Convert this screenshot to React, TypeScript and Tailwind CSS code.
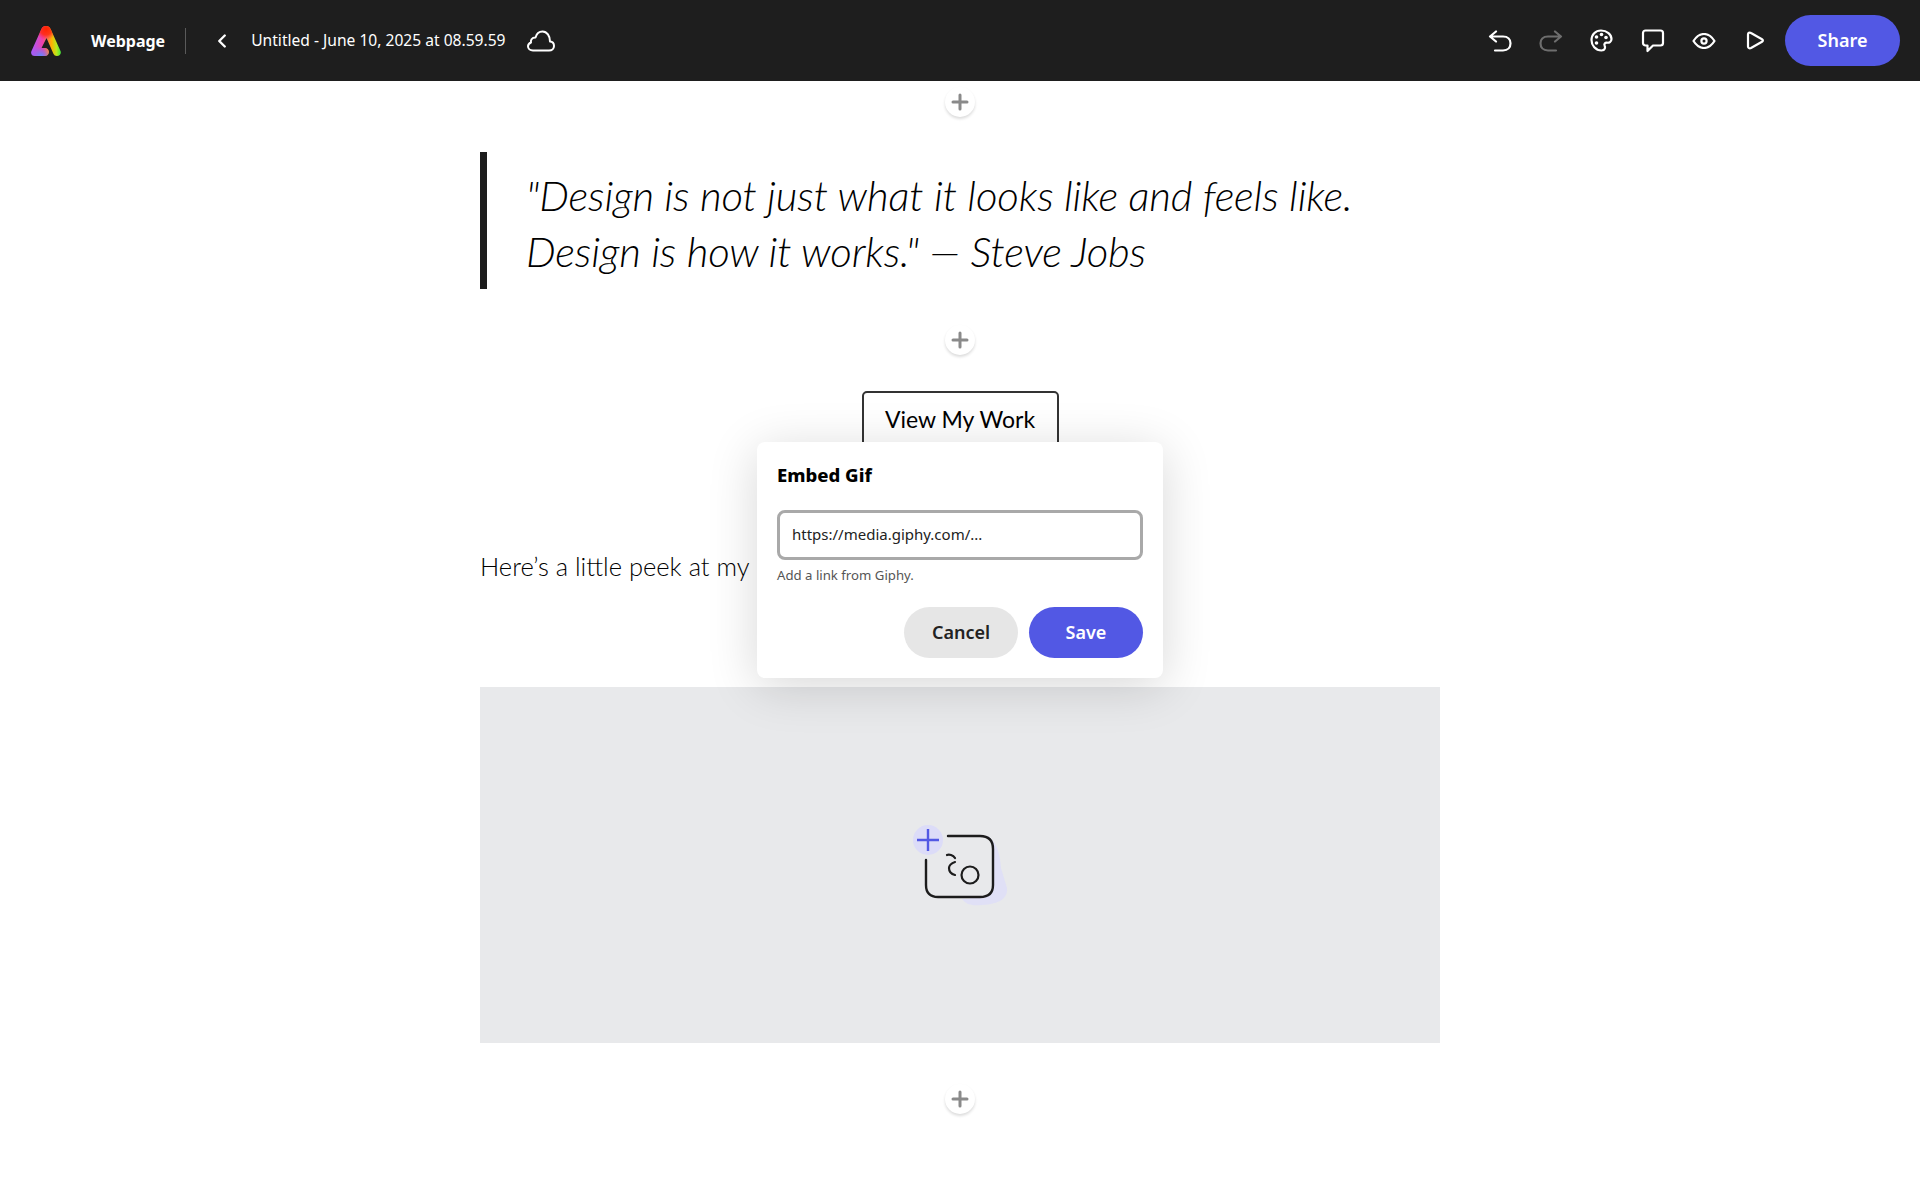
import { ChevronLeft, Plus } from 'lucide-react';
import type { ReactNode } from 'react';

const uiFont = "font-['Noto_Sans',sans-serif]";
const docFont = "font-['Lato',sans-serif]";

function AppLogo() {
  return (
    <svg width="30" height="30" viewBox="0 0 30 30">
      <defs>
        <clipPath id="logoShape">
          <path d="M15 0C17.5 0 18.7 1 19.6 3L29.5 25C30.6 27.5 29 30 26 30C24.3 30 23 29.2 22.3 27.5L15.5 12L10.5 22L14 22C16.500 22 18 23.7 18 26C18 28.3 16.5 30 14 30L4 30C1 30 -.7 27.5 .5 25L10.4 3C11.3 1 12.5 0 15 0Z" />
        </clipPath>
        <linearGradient id="logoBase" x1="0" y1="0" x2="1" y2="0">
          <stop offset="0" stopColor="#a35cff" />
          <stop offset="0.4" stopColor="#f23fa8" />
          <stop offset="0.68" stopColor="#ffb000" />
          <stop offset="0.85" stopColor="#b8e81c" />
          <stop offset="1" stopColor="#3fe83a" />
        </linearGradient>
        <radialGradient id="logoTop" cx="0.5" cy="0.5" r="0.5">
          <stop offset="0" stopColor="#ff2200" />
          <stop offset="0.55" stopColor="#ff2a10" stopOpacity="0.85" />
          <stop offset="1" stopColor="#ff2a60" stopOpacity="0" />
        </radialGradient>
        <radialGradient id="logoLow" cx="0.5" cy="0.5" r="0.5">
          <stop offset="0" stopColor="#5f8bff" />
          <stop offset="1" stopColor="#7b6cff" stopOpacity="0" />
        </radialGradient>
      </defs>
      <g clipPath="url(#logoShape)">
        <rect width="30" height="30" fill="url(#logoBase)" />
        <circle cx="15" cy="3" r="11" fill="url(#logoTop)" />
        <circle cx="10" cy="30" r="10" fill="url(#logoLow)" />
      </g>
    </svg>
  );
}

function CloudIcon() {
  return (
    <svg width="28" height="22" viewBox="0 0 28 22" fill="none" stroke="currentColor" strokeWidth="2" strokeLinejoin="round">
      <path d="M6 20.500H22C25 20.500 27 18.500 27 16C27 13.500 25.200 11.700 23 11.500C23 6 20 1.500 15.500 1.500C12 1.500 9.500 3.800 8.500 7.500C4.500 7.500 3.500 10.500 4 12.500C2.200 13.200 1 14.800 1 16.300C1 18.700 3 20.500 6 20.500Z" />
    </svg>
  );
}

function UndoIcon({ flip }: { flip?: boolean }) {
  return (
    <svg width="24" height="22" viewBox="0 0 24 22" fill="none" stroke="currentColor" strokeWidth="2.2" strokeLinecap="round" strokeLinejoin="round" className={flip ? '-scale-x-100' : ''}>
      <path d="M8 1.500L2 6.500L8 11.500M2 6.500H15C20 6.500 22.500 9.500 22.500 13.200C22.500 17.200 20 20.500 15 20.500H7" />
    </svg>
  );
}

function PaletteIcon() {
  return (
    <svg width="23" height="23" viewBox="0 0 23 23" fill="none" stroke="currentColor" strokeWidth="2.2">
      <path d="M11 1.500C17 1.500 21.500 5.500 21.500 10C21.500 13 19 14 17 13.700C15 13.500 13.800 15 14.600 16.600C15.500 18.200 15.300 21.500 11.500 21.500C5.500 21.500 1.500 16.500 1.500 11C1.500 5.500 5.500 1.500 11 1.500Z" />
      <g fill="currentColor" stroke="none">
        <circle cx="6.500" cy="8" r="1.800" />
        <circle cx="11.500" cy="5.500" r="1.800" />
        <circle cx="16" cy="8.500" r="1.800" />
        <circle cx="6.500" cy="14" r="1.800" />
      </g>
    </svg>
  );
}

function CommentIcon() {
  return (
    <svg width="24" height="24" viewBox="0 0 24 24" fill="none" stroke="currentColor" strokeWidth="2.2" strokeLinejoin="round">
      <path d="M4.500 1.500H19.500C21 1.500 22 2.500 22 4V14C22 15.500 21 16.500 19.500 16.500H12L6.500 22V16.500H4.500C3 16.500 2 15.500 2 14V4C2 2.500 3 1.500 4.500 1.500Z" />
    </svg>
  );
}

function EyeIcon() {
  return (
    <svg width="24" height="16" viewBox="0 0 24 16" fill="none" stroke="currentColor" strokeWidth="2.2" strokeLinejoin="round">
      <path d="M1.500 8C5 2.500 8.500 1 12 1C15.500 1 19 2.500 22.500 8C19 13.500 15.500 15 12 15C8.500 15 5 13.500 1.500 8Z" />
      <circle cx="12" cy="8" r="2.600" />
    </svg>
  );
}

function PlayIcon() {
  return (
    <svg width="18" height="19" viewBox="0 0 18 19" fill="none" stroke="currentColor" strokeWidth="2.2" strokeLinejoin="round">
      <path d="M2 3.500C2 2 3.500 1 5 2L16 8.200C17.200 8.900 17.200 10 16 10.700L5 17C3.500 17.800 2 17 2 15.500Z" />
    </svg>
  );
}

function ToolSlot({ children, muted }: { children: ReactNode; muted?: boolean }) {
  return <div className={`flex h-8 w-[51px] items-center justify-center ${muted ? 'text-[#6e6e6e]' : ''}`}>{children}</div>;
}

function AddBlock() {
  return (
    <div className="flex justify-center">
      <button className="flex h-[30px] w-[30px] items-center justify-center rounded-full bg-white text-[#8a8a8a] shadow-[0_2px_3px_rgba(0,0,0,0.14)]">
        <Plus size={24} strokeWidth={3} />
      </button>
    </div>
  );
}

function MediaPlaceholder() {
  return (
    <svg width="100" height="90" viewBox="0 0 100 90" fill="none">
      <path d="M60 16H78C86 22 90 32 91 48L97 68C98 78 90 84 72 85C60 86 56 84 52 79H60Z" fill="#e0e0f6" />
      <path d="M38 16H70C79 16 83 20 83 29V65C83 73 79 77 70 77H28C20 77 16 73 16 65V40Z" fill="#e8e9eb" />
      <circle cx="18" cy="20" r="15" fill="#dcdcf8" />
      <path d="M18 9V31M7 20H29" stroke="#5258e4" strokeWidth="2.400" />
      <path d="M38 16H70C79 16 83 20 83 29V65C83 73 79 77 70 77H28C20 77 16 73 16 65V40" stroke="#1c1c1c" strokeWidth="2.400" strokeLinecap="round" />
      <circle cx="60" cy="55" r="8.500" stroke="#1c1c1c" strokeWidth="2.200" />
      <path d="M45 42C41 43 39 46 39 48C39 51 41 54 45 55" stroke="#1c1c1c" strokeWidth="2.200" strokeLinecap="round" />
      <path d="M37 35C39 34 43 35 45 38" stroke="#1c1c1c" strokeWidth="2.200" strokeLinecap="round" />
    </svg>
  );
}

export default function App() {
  return (
    <div className="relative min-h-[1200px] bg-white">
      <header className={`flex h-[81px] items-center justify-between bg-[#1e1e1e] pl-[31px] pr-5 text-white ${uiFont}`}>
        <div className="flex items-center">
          <AppLogo />
          <span className="ml-[30px] text-[16px] font-bold">Webpage</span>
          <div className="ml-5 h-[26px] w-px bg-[#5a5a5a]" />
          <ChevronLeft className="ml-[25px]" size={22} strokeWidth={2.6} />
          <span className="ml-[18px] text-[15.6px]">Untitled - June 10, 2025 at 08.59.59</span>
          <div className="ml-[21px]">
            <CloudIcon />
          </div>
        </div>
        <div className="flex items-center">
          <ToolSlot><UndoIcon /></ToolSlot>
          <ToolSlot muted><UndoIcon flip /></ToolSlot>
          <ToolSlot><PaletteIcon /></ToolSlot>
          <ToolSlot><CommentIcon /></ToolSlot>
          <ToolSlot><EyeIcon /></ToolSlot>
          <ToolSlot><PlayIcon /></ToolSlot>
          <button className="ml-[5px] h-[51px] w-[115px] rounded-full bg-[#5258e4] text-[18px] font-semibold text-white">Share</button>
        </div>
      </header>

      <main className={`mx-auto w-[960px] text-black ${docFont}`}>
        <div className="pt-[6px]">
          <AddBlock />
        </div>
        <blockquote className="mt-[35px] border-l-[7px] border-[#1c1c1c] pb-[10px] pl-[39px] pt-[15px] text-[42px] font-light italic leading-[56px] tracking-[-0.15px]">
          "Design is not just what it looks like and feels like.
          <br />
          Design is how it works." — Steve Jobs
        </blockquote>
        <div className="mt-[36px]">
          <AddBlock />
        </div>
        <div className="mt-[36px] flex justify-center">
          <button className="h-[56px] w-[197px] rounded-[5px] border-2 border-[#333] text-[23px]">View My Work</button>
        </div>
        <p className="mt-[101px] text-[25.500px] font-light leading-[36px]">Here’s a little peek at my</p>
        <div className="mt-[103px] flex h-[356px] items-center justify-center bg-[#e8e9eb]">
          <MediaPlaceholder />
        </div>
        <div className="mt-[41px]">
          <AddBlock />
        </div>
      </main>

      <div className={`absolute left-[757px] top-[442px] w-[406px] rounded-lg bg-white px-5 pb-5 pt-[21px] shadow-[0_8px_50px_rgba(0,0,0,0.16)] ${uiFont}`}>
        <h2 className="text-[18.500px] font-extrabold leading-6 text-black">Embed Gif</h2>
        <div className="mt-[23px] flex h-[50px] items-center rounded-lg border-[3px] border-[#a9a9a9] pb-px pl-[12px] text-[15px] text-[#222]">
          https://media.giphy.com/...
        </div>
        <p className="mt-[5px] text-[13.200px] leading-5 text-[#555]">Add a link from Giphy.</p>
        <div className="mt-[22px] flex justify-end gap-[11px]">
          <button className="h-[51px] w-[114px] rounded-full bg-[#e6e6e6] text-[18px] font-semibold text-[#222]">Cancel</button>
          <button className="h-[51px] w-[114px] rounded-full bg-[#5258e4] text-[18px] font-semibold text-white">Save</button>
        </div>
      </div>
    </div>
  );
}
